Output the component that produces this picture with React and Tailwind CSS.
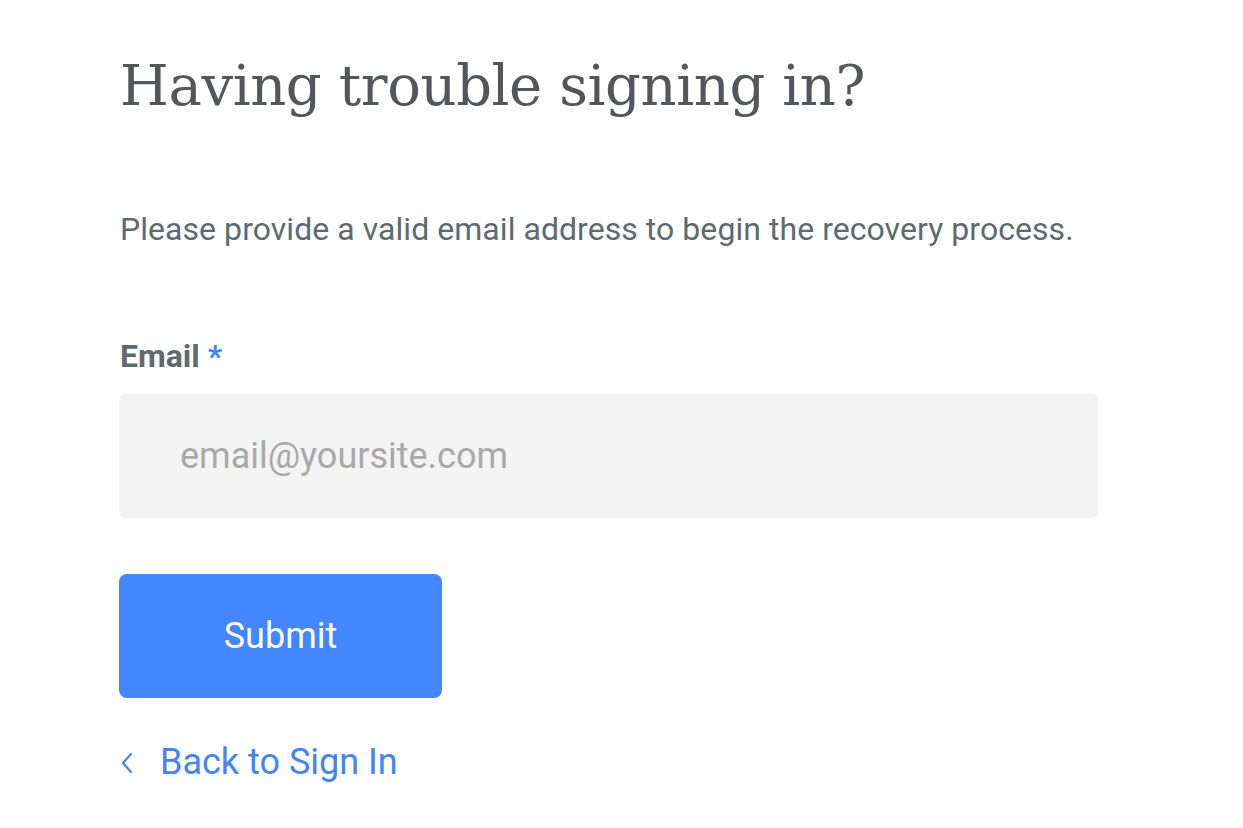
export default function App() {
  return (
    <div className="min-h-screen bg-white" style={{ fontFamily: 'Roboto, "Noto Sans", sans-serif' }}>
      <div className="w-[1000px] pl-[120px] pt-[48px]">
        <h1 className="font-['DejaVu_Serif',serif] text-[56px] font-light leading-[76px] tracking-[-0.4px] text-[#55565b]">
          Having trouble signing in?
        </h1>

        <p className="mt-[85px] whitespace-nowrap text-[32px] leading-[40px] tracking-[0.05px] text-[#5f6a6f]">
          Please provide a valid email address to begin the recovery process.
        </p>

        <form className="mt-[87px]" onSubmit={(e) => e.preventDefault()}>
          <label className="block text-[32px] font-bold leading-[40px] text-[#5f6a6f]">
            Email <span className="text-[#4285f4]">*</span>
          </label>
          <input
            type="email"
            placeholder="email@yoursite.com"
            className="-ml-px mt-[18px] block h-[124px] w-[979px] rounded-[6px] bg-[#f4f4f4] pl-[61px] text-[36px] text-[#333] outline-none placeholder:text-[#a9a9a9]"
          />
          <button
            type="submit"
            className="-ml-px mt-[56px] block h-[124px] w-[323px] rounded-[8px] bg-[#4386fe] text-[36px] text-white"
          >
            Submit
          </button>
        </form>

        <a href="#" className="mt-[44px] flex items-center gap-[26px] text-[36px] leading-[40px] text-[#4285f4]">
          <svg width="14" height="22" viewBox="0 0 14 22" fill="none" className="mt-[2px]">
            <path d="M11 2 L3 11 L11 20" stroke="#4285f4" strokeWidth="2.2" strokeLinecap="round" strokeLinejoin="round" />
          </svg>
          Back to Sign In
        </a>
      </div>
    </div>
  );
}
